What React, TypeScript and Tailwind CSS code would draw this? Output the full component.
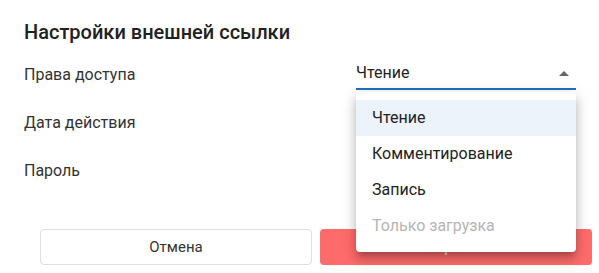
import { useState } from "react";

const options = [
  { value: "read", label: "Чтение" },
  { value: "comment", label: "Комментирование" },
  { value: "write", label: "Запись" },
  { value: "upload", label: "Только загрузка", disabled: true },
];

function Row({ label, children }: { label: string; children: React.ReactNode }) {
  return (
    <div className="flex h-[48px] items-center">
      <div className="w-[332px] text-[16px] text-[#333333]">{label}</div>
      <div className="relative w-[220px]">{children}</div>
    </div>
  );
}

export default function App() {
  const [value] = useState("read");
  const current = options.find((o) => o.value === value);

  return (
    <div
      className="h-[273px] w-[599px] overflow-hidden bg-white"
      style={{ fontFamily: "Roboto, 'Noto Sans', sans-serif" }}
    >
      <div className="pl-[24px] pt-[19px]">
        <h2 className="h-[26px] text-[20px] font-medium leading-[26px] text-[#212121]">
          Настройки внешней ссылки
        </h2>
        <div className="mt-[6px]">
          <Row label="Права доступа">
            <div className="flex h-[30px] items-center justify-between border-b-2 border-[#1f6fbf] pb-[2px]">
              <span className="text-[16px] text-[#222222]">{current?.label}</span>
              <span className="mr-[7px] h-0 w-0 border-x-[5px] border-b-[5px] border-x-transparent border-b-[#666666]" />
            </div>
            {/* open menu */}
            <ul className="absolute left-0 top-[32px] z-10 w-[220px] rounded-[4px] bg-white py-[8px] shadow-[0_5px_5px_-3px_rgba(0,0,0,0.2),0_8px_10px_1px_rgba(0,0,0,0.14),0_3px_14px_2px_rgba(0,0,0,0.12)]">
              {options.map((o) => (
                <li
                  key={o.value}
                  className={
                    "flex h-[36px] items-center px-[16px] text-[16px] " +
                    (o.value === value ? "bg-[#edf3fb] " : "") +
                    (o.disabled ? "text-[#b5b5b5]" : "text-[#222222]")
                  }
                >
                  {o.label}
                </li>
              ))}
            </ul>
          </Row>
          <Row label="Дата действия">
            <div className="h-[30px] border-b border-[#cccccc]" />
          </Row>
          <Row label="Пароль">
            <div className="h-[30px] border-b border-[#cccccc]" />
          </Row>
        </div>
        <div className="mt-[34px] flex gap-[8px] pl-[16px]">
          <button className="h-[36px] w-[272px] rounded-[4px] border border-[#e0e0e0] bg-white text-[15px] text-[#333333]">
            Отмена
          </button>
          <button className="h-[36px] w-[272px] rounded-[4px] bg-[#ff6b6b] text-[15px] text-white">
            Сохранить
          </button>
        </div>
      </div>
    </div>
  );
}
